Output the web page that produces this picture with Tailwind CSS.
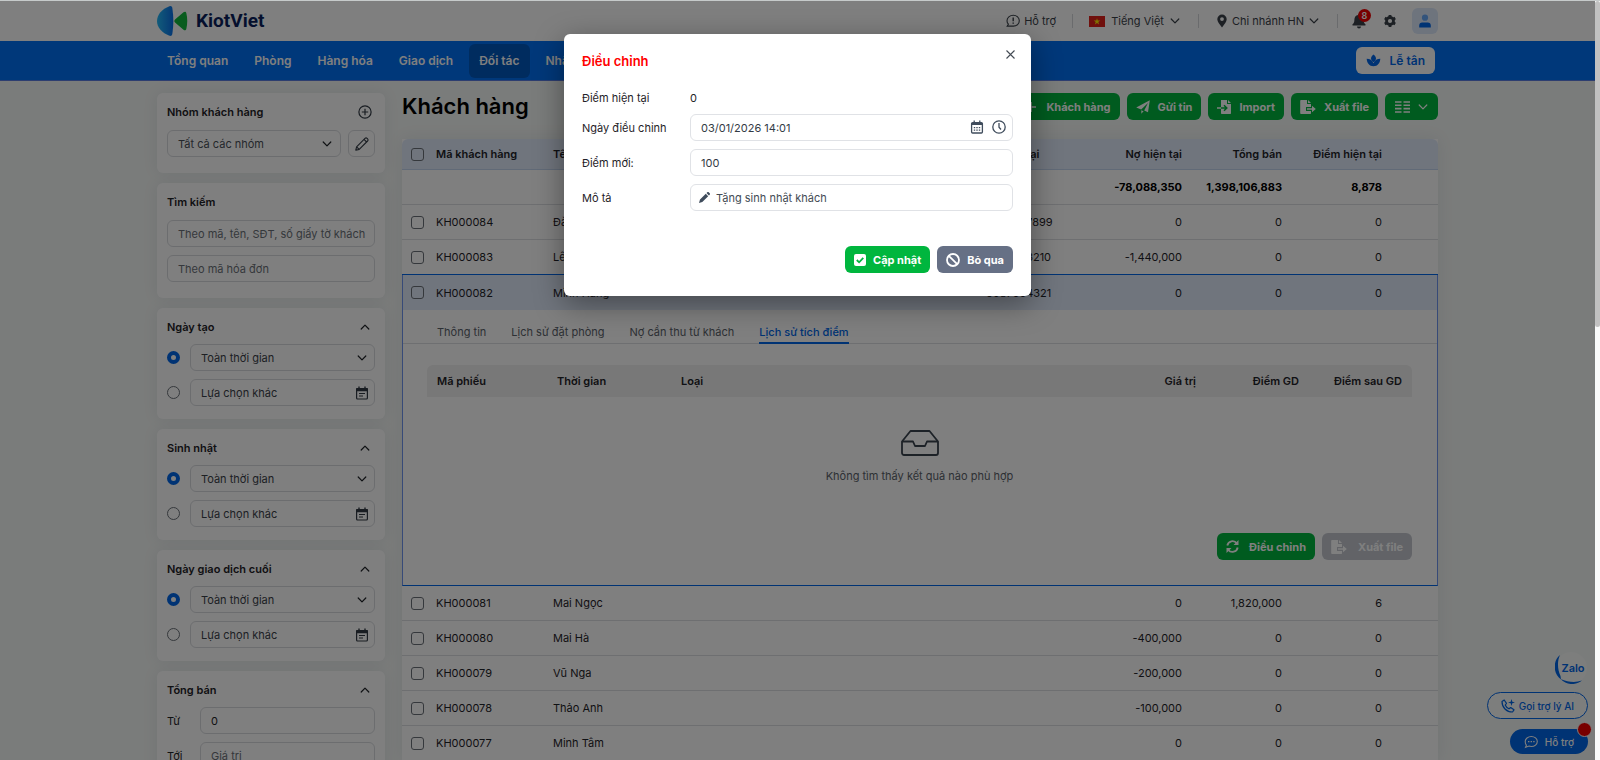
<!DOCTYPE html>
<html lang="vi">
    <head>
        <meta charset="UTF-8">
        <meta name="viewport" content="width=device-width, initial-scale=1.0">
        <title>Khách hàng | KiotViet</title>
        <script src="https://cdn.jsdelivr.net/npm/@tailwindcss/browser@4"></script>
    </head>
    <body class="font-['Inter','Noto_Sans',sans-serif] text-[11px] leading-4 text-[#1f2328]">

        <!-- Icons -->
        <svg class="hidden">
            <symbol id="i-down" viewBox="0 0 10 10"><path d="M1.2 3 5 6.9 8.8 3" fill="none" stroke="currentColor" stroke-width="1.2" stroke-linecap="round" stroke-linejoin="round"/></symbol>
            <symbol id="i-up" viewBox="0 0 10 10"><path d="M1.2 7 5 3.1 8.8 7" fill="none" stroke="currentColor" stroke-width="1.2" stroke-linecap="round" stroke-linejoin="round"/></symbol>
            <symbol id="i-note" viewBox="0 0 14 14"><path d="M4 .5v2.500M10 .5v2.500" stroke="currentColor" stroke-width="1.400"/><path d="M1 3.200C1 2.400 1.400 2 2.200 2h9.600c.8 0 1.200.4 1.200 1.200V5.200H1z" fill="currentColor"/><rect x="1.600" y="2.600" width="10.800" height="10.400" rx="1" fill="none" stroke="currentColor" stroke-width="1.200"/><path d="M4 7.500h6M4 10h4" stroke="currentColor" stroke-width="1.200"/></symbol>
            <symbol id="i-export" viewBox="0 0 16 14"><path d="M1 0h6v4h4v3H6v4h5v2.300a.7.7 0 0 1-.7.7H1a.8.8 0 0 1-.8-.7V.8A.8.8 0 0 1 1 0z" fill="currentColor"/><path d="M8 0l3 3H8z" fill="currentColor"/><path d="M7 8.200h5V5.800L15.800 9 12 12.200V9.800H7z" fill="currentColor"/></symbol>
        </svg>

        <div class="flex h-screen flex-col overflow-hidden border-t border-[#c6caca]">
            <div class="flex min-h-0 flex-1">
                <div class="relative min-w-0 flex-1 overflow-hidden bg-[#f5f8f6]">

                    <!-- Header -->
                    <header class="h-10 bg-white">
                        <div class="mx-auto flex h-full max-w-[1281px] items-center justify-between">
                            <a href="#" class="flex items-center gap-2 font-['Roboto','Inter',sans-serif] text-[19px] leading-6 font-bold text-[#0a1f5c]">
                                <svg class="h-8 w-[31px]" viewBox="0 0 31 32">
                                    <defs><linearGradient id="lg" x1="0" x2="1"><stop offset="0" stop-color="#25b8f5"/><stop offset="1" stop-color="#0a6fe8"/></linearGradient></defs>
                                    <path d="M12.500 1.200C5 4 0 9.500 0 16s5 12 12.500 14.800c1.500.5 2.500-.2 2.800-1.800 1.400-8.500 1.400-17.500 0-26-.3-1.600-1.300-2.300-2.800-1.800z" fill="url(#lg)"/>
                                    <path d="M18 14.600 26.500 7.300c1.200-1 2.400-.7 2.800.7 1.300 5 1.300 11 0 16-.4 1.400-1.600 1.700-2.800.7L18 17.400c-.9-.8-.9-2 0-2.800z" fill="#12b83c"/>
                                </svg>
                                KiotViet
                            </a>
                            <div class="flex items-center text-[#3a4149]">
                                <a href="#" class="flex items-center gap-1">
                                    <svg class="h-[14px] w-[14px]" viewBox="0 0 14 14" fill="none" stroke="currentColor" stroke-width="1.1"><path d="M7.300 1.300c3.400 0 6 2.300 6 5.400s-2.600 5.400-6 5.400H1.200l1.200-1.900C1.500 9.300 1 8.100 1 6.700c0-3.100 2.800-5.400 6.300-5.400z"/><path d="M7.200 3.600v3.600M7.200 8.400v1.400" stroke-width="1.400"/></svg>
                                    Hỗ trợ
                                </a>
                                <span class="mx-4 h-[14px] w-px bg-[#d5d7db]"></span>
                                <button class="flex items-center gap-[6px]">
                                    <svg class="h-[11px] w-4" viewBox="0 0 16 11"><path fill="#e0201b" d="M0 0h16v11H0z"/><path fill="#ffe600" d="m8 2.200.8 2.400h2.500L9.300 6.100l.8 2.400L8 7 5.900 8.500l.8-2.400-2-1.500h2.500z"/></svg>
                                    Tiếng Việt
                                    <svg class="h-[10px] w-[10px]"><use href="#i-down"/></svg>
                                </button>
                                <span class="mx-[18px] h-[14px] w-px bg-[#d5d7db]"></span>
                                <button class="flex items-center gap-[5px]">
                                    <svg class="h-[14px] w-[10px]" viewBox="0 0 10 14"><path fill="currentColor" fill-rule="evenodd" d="M5 .5a4.700 4.700 0 0 1 4.700 4.700C9.700 7.500 7.600 10 5 13.500 2.400 10 .3 7.500.3 5.200A4.700 4.700 0 0 1 5 .5zM5 3.200a1.900 1.900 0 1 0 0 3.800 1.900 1.900 0 0 0 0-3.800z"/></svg>
                                    Chi nhánh HN
                                    <svg class="h-[10px] w-[10px]"><use href="#i-down"/></svg>
                                </button>
                                <span class="mr-[14px] ml-[18px] h-[14px] w-px bg-[#d5d7db]"></span>
                                <button class="relative" aria-label="Thông báo">
                                    <svg class="h-4 w-[14px]" viewBox="0 0 14 16" fill="currentColor"><path d="M7 1a1 1 0 0 1 1 1c2.300.5 3.600 2.200 3.600 4.500 0 2.500.6 3.700 1.800 4.700.5.500.2 1.300-.5 1.300H1.100c-.7 0-1-.8-.5-1.300 1.200-1 1.800-2.200 1.800-4.700C2.400 4.200 3.700 2.500 6 2a1 1 0 0 1 1-1zM5 13.500h4a2 2 0 0 1-4 0z"/></svg>
                                    <span class="absolute -top-1 left-[6px] h-[13px] w-[13px] rounded-full bg-[#f00000] text-center text-[9px] leading-[13px] font-semibold text-white">8</span>
                                </button>
                                <button class="ml-[17px]" aria-label="Thiết lập">
                                    <svg class="h-[14px] w-[14px]" viewBox="0 0 14 14"><path d="M7 1v12M1.800 4l10.400 6M1.800 10l10.400-6" stroke="currentColor" stroke-width="2.800"/><circle cx="7" cy="7" r="3.500" fill="none" stroke="currentColor" stroke-width="2.800"/><circle cx="7" cy="7" r="2.100" fill="#fff"/></svg>
                                </button>
                                <button class="ml-[15px] flex h-[26px] w-[26px] items-center justify-center rounded-md bg-[#dce8fb]" aria-label="Tài khoản">
                                    <svg class="h-[14px] w-3" viewBox="0 0 12 14"><circle cx="6" cy="3.700" r="3.100" fill="#67a8f8"/><path d="M.2 13.500v-2c0-2 1.200-3 3-3h5.600c1.800 0 3 1 3 3v2z" fill="#0066e8"/></svg>
                                </button>
                            </div>
                        </div>
                    </header>

                    <!-- Menu -->
                    <nav class="h-10 border-b border-[#5b7de0] bg-[#0070f4]">
                        <div class="mx-auto flex h-full max-w-[1281px] items-center gap-[6px] text-[12px] font-semibold text-white">
                            <a href="#" class="rounded-md px-[10px] py-2">Tổng quan</a>
                            <a href="#" class="rounded-md px-[10px] py-2">Phòng</a>
                            <a href="#" class="rounded-md px-[10px] py-2">Hàng hóa</a>
                            <a href="#" class="rounded-md px-[10px] py-2">Giao dịch</a>
                            <a href="#" class="rounded-md bg-[#0058bf] px-[10px] py-[9px]">Đối tác</a>
                            <a href="#" class="rounded-md px-[10px] py-2">Nhân viên</a>
                            <button class="mr-[3px] ml-auto flex h-[27px] items-center gap-[9px] rounded-md bg-white px-[10px] text-[#0066e8]">
                                <svg class="h-[14px] w-[15px]" viewBox="0 0 16 16" fill="currentColor"><path d="M8 .5c2 1.500 2.800 3 2.800 4.500S9.800 8 8 9.500C6.200 8 5.200 6.500 5.200 5S6 2 8 .5z"/><path d="M.2 5.500c3.800 0 6.300 1.500 7.800 5 1.500-3.500 4-5 7.800-5-.3 5-3 8.500-7.800 8.500S.5 10.500.2 5.500z"/></svg>
                                Lễ tân
                            </button>
                        </div>
                    </nav>

                    <div class="mx-auto flex max-w-[1281px] gap-[17px] pt-3">

                        <!-- Sidebar -->
                        <aside class="flex w-[228px] shrink-0 flex-col gap-[10px]">
                            <section class="rounded-md bg-white px-[10px] pt-[10px] pb-4 shadow-[0_0_16px_rgba(20,40,80,0.08)]">
                                <div class="mb-[9px] flex h-[18px] items-center justify-between pr-[3px]">
                                    <h2 class="font-semibold">Nhóm khách hàng</h2>
                                    <button aria-label="Thêm nhóm"><svg class="h-[14px] w-[14px]" viewBox="0 0 14 14" fill="none" stroke="#333b45" stroke-width="1.2"><circle cx="7" cy="7" r="6.100"/><path d="M7 3.800v6.400M3.800 7h6.400"/></svg></button>
                                </div>
                                <div class="flex gap-[7px]">
                                    <div class="relative flex-1">
                                        <select aria-label="Nhóm khách hàng" class="h-[27px] w-full appearance-none rounded-md border border-[#d9dbdf] px-[10px] text-[#4a5058]"><option>Tất cả các nhóm</option></select>
                                        <svg class="pointer-events-none absolute top-[9px] right-[9px] h-[10px] w-[10px]"><use href="#i-down"/></svg>
                                    </div>
                                    <button class="flex h-[27px] w-[27px] items-center justify-center rounded-md border border-[#d9dbdf]" aria-label="Sửa nhóm">
                                        <svg class="h-[14px] w-[14px]" viewBox="0 0 14 14" fill="none" stroke="#333b45" stroke-width="1.1" stroke-linejoin="round"><path d="M.8 13.200l.8-3.400 8.400-8.400c.6-.6 1.500-.6 2.100 0l.5.5c.6.6.6 1.500 0 2.100l-8.400 8.400zM9 2.400l2.600 2.600M1.600 9.800l2.600 2.600"/></svg>
                                    </button>
                                </div>
                            </section>

                            <section class="rounded-md bg-white px-[10px] pt-[10px] pb-4 shadow-[0_0_16px_rgba(20,40,80,0.08)]">
                                <h2 class="mb-[9px] h-[18px] leading-[18px] font-semibold">Tìm kiếm</h2>
                                <div class="flex flex-col gap-2">
                                    <input type="text" aria-label="Tìm khách hàng" placeholder="Theo mã, tên, SĐT, số giấy tờ khách" class="h-[27px] rounded-md border border-[#d9dbdf] pr-[6px] pl-[10px] placeholder:text-[#6b7178]">
                                    <input type="text" aria-label="Tìm hóa đơn" placeholder="Theo mã hóa đơn" class="h-[27px] rounded-md border border-[#d9dbdf] pr-[6px] pl-[10px] placeholder:text-[#6b7178]">
                                </div>
                            </section>

                            <section class="rounded-md bg-white px-[10px] pt-[10px] pb-[13px] shadow-[0_0_16px_rgba(20,40,80,0.08)]">
                                <div class="mb-2 flex h-[18px] items-center justify-between pr-[5px]">
                                    <h2 class="font-semibold">Ngày tạo</h2>
                                    <button aria-label="Thu gọn"><svg class="h-[10px] w-[10px]"><use href="#i-up"/></svg></button>
                                </div>
                                <div class="flex flex-col gap-2">
                                    <div class="flex items-center gap-[10px]">
                                        <input type="radio" name="created" aria-label="Toàn thời gian" checked class="h-[13px] w-[13px] appearance-none rounded-full border border-[#6b7178] checked:border-4 checked:border-[#0066e8]">
                                        <div class="relative flex-1">
                                            <select aria-label="Ngày tạo" class="h-[27px] w-full appearance-none rounded-md border border-[#d9dbdf] px-[10px] text-[#3a4149]"><option>Toàn thời gian</option></select>
                                            <svg class="pointer-events-none absolute top-[9px] right-2 h-[10px] w-[10px]"><use href="#i-down"/></svg>
                                        </div>
                                    </div>
                                    <div class="flex items-center gap-[10px]">
                                        <input type="radio" name="created" aria-label="Lựa chọn khác" class="h-[13px] w-[13px] appearance-none rounded-full border border-[#6b7178] checked:border-4 checked:border-[#0066e8]">
                                        <div class="relative flex-1">
                                            <input type="text" readonly value="Lựa chọn khác" aria-label="Khoảng ngày tạo" class="h-[27px] w-full rounded-md border border-[#d9dbdf] px-[10px] text-[#3a4149]">
                                            <svg class="pointer-events-none absolute top-[7px] right-[6px] h-[14px] w-[14px] text-[#333b45]"><use href="#i-note"/></svg>
                                        </div>
                                    </div>
                                </div>
                            </section>

                            <section class="rounded-md bg-white px-[10px] pt-[10px] pb-[13px] shadow-[0_0_16px_rgba(20,40,80,0.08)]">
                                <div class="mb-2 flex h-[18px] items-center justify-between pr-[5px]">
                                    <h2 class="font-semibold">Sinh nhật</h2>
                                    <button aria-label="Thu gọn"><svg class="h-[10px] w-[10px]"><use href="#i-up"/></svg></button>
                                </div>
                                <div class="flex flex-col gap-2">
                                    <div class="flex items-center gap-[10px]">
                                        <input type="radio" name="birthday" aria-label="Toàn thời gian" checked class="h-[13px] w-[13px] appearance-none rounded-full border border-[#6b7178] checked:border-4 checked:border-[#0066e8]">
                                        <div class="relative flex-1">
                                            <select aria-label="Sinh nhật" class="h-[27px] w-full appearance-none rounded-md border border-[#d9dbdf] px-[10px] text-[#3a4149]"><option>Toàn thời gian</option></select>
                                            <svg class="pointer-events-none absolute top-[9px] right-2 h-[10px] w-[10px]"><use href="#i-down"/></svg>
                                        </div>
                                    </div>
                                    <div class="flex items-center gap-[10px]">
                                        <input type="radio" name="birthday" aria-label="Lựa chọn khác" class="h-[13px] w-[13px] appearance-none rounded-full border border-[#6b7178] checked:border-4 checked:border-[#0066e8]">
                                        <div class="relative flex-1">
                                            <input type="text" readonly value="Lựa chọn khác" aria-label="Khoảng sinh nhật" class="h-[27px] w-full rounded-md border border-[#d9dbdf] px-[10px] text-[#3a4149]">
                                            <svg class="pointer-events-none absolute top-[7px] right-[6px] h-[14px] w-[14px] text-[#333b45]"><use href="#i-note"/></svg>
                                        </div>
                                    </div>
                                </div>
                            </section>

                            <section class="rounded-md bg-white px-[10px] pt-[10px] pb-[13px] shadow-[0_0_16px_rgba(20,40,80,0.08)]">
                                <div class="mb-2 flex h-[18px] items-center justify-between pr-[5px]">
                                    <h2 class="font-semibold">Ngày giao dịch cuối</h2>
                                    <button aria-label="Thu gọn"><svg class="h-[10px] w-[10px]"><use href="#i-up"/></svg></button>
                                </div>
                                <div class="flex flex-col gap-2">
                                    <div class="flex items-center gap-[10px]">
                                        <input type="radio" name="lastdeal" aria-label="Toàn thời gian" checked class="h-[13px] w-[13px] appearance-none rounded-full border border-[#6b7178] checked:border-4 checked:border-[#0066e8]">
                                        <div class="relative flex-1">
                                            <select aria-label="Ngày giao dịch cuối" class="h-[27px] w-full appearance-none rounded-md border border-[#d9dbdf] px-[10px] text-[#3a4149]"><option>Toàn thời gian</option></select>
                                            <svg class="pointer-events-none absolute top-[9px] right-2 h-[10px] w-[10px]"><use href="#i-down"/></svg>
                                        </div>
                                    </div>
                                    <div class="flex items-center gap-[10px]">
                                        <input type="radio" name="lastdeal" aria-label="Lựa chọn khác" class="h-[13px] w-[13px] appearance-none rounded-full border border-[#6b7178] checked:border-4 checked:border-[#0066e8]">
                                        <div class="relative flex-1">
                                            <input type="text" readonly value="Lựa chọn khác" aria-label="Khoảng ngày giao dịch" class="h-[27px] w-full rounded-md border border-[#d9dbdf] px-[10px] text-[#3a4149]">
                                            <svg class="pointer-events-none absolute top-[7px] right-[6px] h-[14px] w-[14px] text-[#333b45]"><use href="#i-note"/></svg>
                                        </div>
                                    </div>
                                </div>
                            </section>

                            <section class="rounded-md bg-white px-[10px] pt-[10px] pb-[13px] shadow-[0_0_16px_rgba(20,40,80,0.08)]">
                                <div class="mb-2 flex h-[18px] items-center justify-between pr-[5px]">
                                    <h2 class="font-semibold">Tổng bán</h2>
                                    <button aria-label="Thu gọn"><svg class="h-[10px] w-[10px]"><use href="#i-up"/></svg></button>
                                </div>
                                <div class="flex flex-col gap-2">
                                    <div class="flex items-center">
                                        <label for="sumFrom" class="w-[33px]">Từ</label>
                                        <input id="sumFrom" type="text" value="0" class="h-[27px] min-w-0 flex-1 rounded-md border border-[#d9dbdf] px-[10px]">
                                    </div>
                                    <div class="flex items-center">
                                        <label for="sumTo" class="w-[33px]">Tới</label>
                                        <input id="sumTo" type="text" placeholder="Giá trị" class="h-[27px] min-w-0 flex-1 rounded-md border border-[#d9dbdf] px-[10px] placeholder:text-[#6b7178]">
                                    </div>
                                </div>
                            </section>
                        </aside>

                        <!-- Main Content -->
                        <main class="min-w-0 flex-1">
                            <div class="mb-[19px] flex h-[27px] items-center justify-between">
                                <h1 class="text-[22px] leading-[27px] font-semibold text-black">Khách hàng</h1>
                                <div class="flex gap-[7px] font-bold text-white">
                                    <button class="flex h-[27px] items-center gap-[10px] rounded-md bg-[#00b63e] px-[9px]">
                                        <svg class="h-[10px] w-[10px]" viewBox="0 0 10 10"><path d="M5 0v10M0 5h10" stroke="currentColor" stroke-width="1.600"/></svg>
                                        Khách hàng
                                    </button>
                                    <button class="flex h-[27px] items-center gap-2 rounded-md bg-[#00b63e] px-[9px]">
                                        <svg class="h-[14px] w-[14px]" viewBox="0 0 14 14" fill="currentColor"><path d="M13.800.2 12 12.200 8.200 10.600 12 3 5.200 9.400.2 7.600z"/><path d="M5.300 10.300 7.600 11.300 5.300 13.800z"/></svg>
                                        Gửi tin
                                    </button>
                                    <button class="flex h-[27px] items-center gap-2 rounded-md bg-[#00b63e] px-[9px]">
                                        <svg class="h-[14px] w-[14px]" viewBox="0 0 14 14"><path d="M4 0h6v4h4v9.300a.7.7 0 0 1-.7.7H4.700a.7.7 0 0 1-.7-.7zM11 0l3 3h-3z" fill="currentColor"/><path d="M4 8h5.500M7 5.200 9.800 8 7 10.800" fill="none" stroke="#00b63e" stroke-width="1.500"/><path d="M0 8h4" stroke="currentColor" stroke-width="1.500"/></svg>
                                        Import
                                    </button>
                                    <button class="flex h-[27px] items-center gap-2 rounded-md bg-[#00b63e] px-[9px]">
                                        <svg class="h-[14px] w-4"><use href="#i-export"/></svg>
                                        Xuất file
                                    </button>
                                    <button class="flex h-[27px] items-center gap-2 rounded-md bg-[#00b63e] px-[10px]" aria-label="Chọn cột">
                                        <svg class="h-3 w-[15px]" viewBox="0 0 15 12"><path d="M0 1h6.500M8.500 1H15M0 4.300h6.500M8.500 4.300H15M0 7.600h6.500M8.500 7.600H15M0 11h6.500M8.500 11H15" stroke="currentColor" stroke-width="1.600"/></svg>
                                        <svg class="h-[10px] w-[10px]"><use href="#i-down"/></svg>
                                    </button>
                                </div>
                            </div>

                            <table class="w-full table-fixed border-separate border-spacing-0 bg-white shadow-[0_0_16px_rgba(20,40,80,0.08)]">
                                <colgroup>
                                    <col class="w-[24px]">
                                    <col class="w-[117px]">
                                    <col>
                                    <col class="w-[116px]">
                                    <col class="w-[100px]">
                                    <col class="w-[100px]">
                                    <col class="w-[100px]">
                                    <col class="w-[46px]">
                                </colgroup>
                                <thead class="bg-[#e0eafb]">
                                    <tr class="[&>th]:h-[31px] [&>th]:border-b [&>th]:border-[#c3d5ee] [&>th]:px-[10px] [&>th]:font-semibold">
                                        <th class="rounded-tl-md !px-0 !pl-[9px]"><input type="checkbox" aria-label="Chọn tất cả" class="block h-[13px] w-[13px] appearance-none rounded-[3px] border border-[#6b7178]"></th>
                                        <th class="text-left">Mã khách hàng</th>
                                        <th class="text-left">Tên khách hàng</th>
                                        <th class="text-left">Điện thoại</th>
                                        <th class="text-right">Nợ hiện tại</th>
                                        <th class="text-right">Tổng bán</th>
                                        <th class="text-right">Điểm hiện tại</th>
                                        <th class="rounded-tr-md"></th>
                                    </tr>
                                </thead>
                                <tbody class="[&>tr>td]:border-b [&>tr>td]:border-[#dcdee2] [&>tr>td]:px-[10px] [&>tr>td:first-child]:px-0 [&>tr>td:first-child]:pl-[9px] [&>tr>td:nth-child(n+5)]:text-right [&>tr:not(.detail)>td]:h-[35px]">
                                    <tr class="font-bold text-black">
                                        <td></td><td></td><td></td><td></td>
                                        <td>-78,088,350</td><td>1,398,106,883</td><td>8,878</td><td></td>
                                    </tr>
                                    <tr>
                                        <td><input type="checkbox" aria-label="KH000084" class="block h-[13px] w-[13px] appearance-none rounded-[3px] border border-[#6b7178]"></td>
                                        <td>KH000084</td><td>Đào Lan</td><td>0987657899</td><td>0</td><td>0</td><td>0</td><td></td>
                                    </tr>
                                    <tr class="[&>td]:!border-[#0066e8]">
                                        <td><input type="checkbox" aria-label="KH000083" class="block h-[13px] w-[13px] appearance-none rounded-[3px] border border-[#6b7178]"></td>
                                        <td>KH000083</td><td>Lê Hoa</td><td>0987653210</td><td>-1,440,000</td><td>0</td><td>0</td><td></td>
                                    </tr>
                                    <tr class="bg-[#e0eafb] [&>td]:!border-b-0">
                                        <td class="border-l !border-l-[#6f95f0] !pl-2"><input type="checkbox" aria-label="KH000082" class="block h-[13px] w-[13px] appearance-none rounded-[3px] border border-[#6b7178]"></td>
                                        <td>KH000082</td><td>Minh Hằng</td><td>0987654321</td><td>0</td><td>0</td><td>0</td><td class="border-r !border-r-[#6f95f0]"></td>
                                    </tr>
                                    <tr class="detail">
                                        <td colspan="8" class="border-x !border-x-[#6f95f0] !border-b-[#0066e8] !p-0">
                                            <div class="flex h-[34px] items-end gap-[25px] border-b border-[#dcdee2] px-[34px] text-[#5b626a]">
                                                <a href="#" class="-mb-px border-b-2 border-transparent pb-[2px]">Thông tin</a>
                                                <a href="#" class="-mb-px border-b-2 border-transparent pb-[2px]">Lịch sử đặt phòng</a>
                                                <a href="#" class="-mb-px border-b-2 border-transparent pb-[2px]">Nợ cần thu từ khách</a>
                                                <a href="#" class="-mb-px border-b-2 border-[#0066e8] pb-[2px] font-medium text-[#0066e8]">Lịch sử tích điểm</a>
                                            </div>
                                            <div class="pt-[21px] pr-[25px] pb-[25px] pl-6">
                                                <table class="w-full table-fixed">
                                                    <colgroup>
                                                        <col class="w-[120px]">
                                                        <col class="w-[124px]">
                                                        <col>
                                                        <col class="w-[120px]">
                                                        <col class="w-[103px]">
                                                        <col class="w-[103px]">
                                                    </colgroup>
                                                    <thead>
                                                        <tr class="h-8 [&>th]:bg-[#f0f0f0] [&>th]:px-[10px] [&>th]:font-semibold">
                                                            <th class="rounded-tl-md text-left">Mã phiếu</th>
                                                            <th class="text-left">Thời gian</th>
                                                            <th class="text-left">Loại</th>
                                                            <th class="text-right">Giá trị</th>
                                                            <th class="text-right">Điểm GD</th>
                                                            <th class="rounded-tr-md text-right">Điểm sau GD</th>
                                                        </tr>
                                                    </thead>
                                                </table>
                                                <div class="flex h-[136px] flex-col items-center gap-3 pt-[33px] text-[#5b626a]">
                                                    <svg class="h-[26px] w-[38px]" viewBox="0 0 38 26" fill="none" stroke="#3a444f" stroke-width="1.800" stroke-linejoin="round"><path d="M1 11.500 9.500 1h19L37 11.500V23a2 2 0 0 1-2 2H3a2 2 0 0 1-2-2z"/><path d="M1 11.500h11l2 4.500h10l2-4.500h11"/></svg>
                                                    <p>Không tìm thấy kết quả nào phù hợp</p>
                                                </div>
                                                <div class="flex justify-end gap-[7px] font-bold text-white">
                                                    <button class="flex h-[27px] items-center gap-[10px] rounded-md bg-[#00b63e] px-[9px]">
                                                        <svg class="h-[13px] w-[13px]" viewBox="0 0 13 13" fill="none" stroke="currentColor" stroke-width="1.800"><path d="M1.300 5.500A5.300 5.300 0 0 1 10.800 3.300M11.700 7.500A5.300 5.300 0 0 1 2.200 9.700"/><path d="M12.500 0v5h-5zM.5 13V8h5z" fill="currentColor" stroke="none"/></svg>
                                                        Điều chỉnh
                                                    </button>
                                                    <button disabled class="flex h-[27px] items-center gap-[11px] rounded-md bg-[#c4c7cf] px-[9px]">
                                                        <svg class="h-[14px] w-4"><use href="#i-export"/></svg>
                                                        Xuất file
                                                    </button>
                                                </div>
                                            </div>
                                        </td>
                                    </tr>
                                    <tr>
                                        <td><input type="checkbox" aria-label="KH000081" class="block h-[13px] w-[13px] appearance-none rounded-[3px] border border-[#6b7178]"></td>
                                        <td>KH000081</td><td>Mai Ngọc</td><td></td><td>0</td><td>1,820,000</td><td>6</td><td></td>
                                    </tr>
                                    <tr>
                                        <td><input type="checkbox" aria-label="KH000080" class="block h-[13px] w-[13px] appearance-none rounded-[3px] border border-[#6b7178]"></td>
                                        <td>KH000080</td><td>Mai Hà</td><td></td><td>-400,000</td><td>0</td><td>0</td><td></td>
                                    </tr>
                                    <tr>
                                        <td><input type="checkbox" aria-label="KH000079" class="block h-[13px] w-[13px] appearance-none rounded-[3px] border border-[#6b7178]"></td>
                                        <td>KH000079</td><td>Vũ Nga</td><td></td><td>-200,000</td><td>0</td><td>0</td><td></td>
                                    </tr>
                                    <tr>
                                        <td><input type="checkbox" aria-label="KH000078" class="block h-[13px] w-[13px] appearance-none rounded-[3px] border border-[#6b7178]"></td>
                                        <td>KH000078</td><td>Thảo Anh</td><td></td><td>-100,000</td><td>0</td><td>0</td><td></td>
                                    </tr>
                                    <tr>
                                        <td><input type="checkbox" aria-label="KH000077" class="block h-[13px] w-[13px] appearance-none rounded-[3px] border border-[#6b7178]"></td>
                                        <td>KH000077</td><td>Minh Tâm</td><td></td><td>0</td><td>0</td><td>0</td><td></td>
                                    </tr>
                                </tbody>
                            </table>
                        </main>
                    </div>

                    <!-- Support buttons -->
                    <div class="absolute right-[7px] bottom-[6px] flex flex-col items-end text-[10px]">
                        <a href="#" class="relative mr-px mb-2 flex h-8 w-8 items-center justify-center rounded-full bg-[#fafcfb] text-[11px] font-semibold text-[#0066e8]">
                            <svg class="absolute inset-0 h-8 w-8" viewBox="0 0 32 32" fill="#0066e8"><path d="M5 3C-2.500 9-2 22 6 27.500L5.500 24C2.500 18 2 9 5 3zM5.500 27C12 34 22 33 27 28.500 20 31 13 30 5.500 27z"/></svg>
                            <span class="relative ml-1">Zalo</span>
                        </a>
                        <a href="#" class="mb-[10px] flex h-[27px] items-center gap-1 rounded-full border border-[#0066e8] bg-[#fafcfb] px-[13px] font-medium text-[#0066e8]">
                            <svg class="h-[14px] w-[14px]" viewBox="0 0 14 14" fill="none" stroke="currentColor" stroke-width="1.200" stroke-linejoin="round"><path d="M1 2.500 3.200 1l2.300 3.300L4.200 6c.7 1.700 2 3 3.800 3.800l1.700-1.300L13 10.800 11.500 13C5.500 13 1 8.500 1 2.500z"/><path d="M10.500 0 11.300 2.700 14 3.500 11.300 4.300 10.500 7 9.700 4.300 7 3.500 9.700 2.700z" fill="currentColor" stroke="none"/></svg>
                            Gọi trợ lý AI
                        </a>
                        <button class="relative flex h-[25px] items-center gap-[7px] rounded-full bg-[#0066e8] px-[14px] font-medium text-white">
                            <svg class="h-[14px] w-[14px]" viewBox="0 0 14 14" fill="none" stroke="currentColor" stroke-width="1.100"><path d="M7.300 1.500c3.300 0 6 2.200 6 5s-2.700 5-6 5c-.8 0-1.600-.1-2.300-.4L1.500 12.300l.9-2.200C1.500 9.200 1.200 8 1.200 6.500c0-2.800 2.800-5 6.100-5z"/><path d="M4 6.600h1.400M6.600 6.600H8M9.200 6.600h1.400" stroke-width="1.400"/></svg>
                            Hỗ trợ
                            <span class="absolute -top-[7px] -right-1 h-[15px] w-[15px] rounded-full border border-white bg-[#f00000]"></span>
                        </button>
                    </div>

                    <!-- Dialog -->
                    <div class="absolute inset-0 flex items-start justify-center bg-black/50 pt-[33px]">
                        <div role="dialog" aria-labelledby="dialogTitle" class="relative w-[467px] rounded-md bg-white px-[18px] pt-[18px] pb-[23px] shadow-[0_8px_30px_rgba(0,0,0,0.4)]">
                            <h2 id="dialogTitle" class="text-[13px] leading-[18px] font-semibold text-[#ff0000]">Điều chỉnh</h2>
                            <button class="absolute top-4 right-4" aria-label="Đóng"><svg class="h-[9px] w-[9px]" viewBox="0 0 9 9"><path d="m.5.500 8 8m0-8-8 8" stroke="#444b54" stroke-width="1.100"/></svg></button>
                            <form class="mt-[19px] flex flex-col gap-2">
                                <div class="flex h-[17px] items-center">
                                    <span class="w-[108px]">Điểm hiện tại</span>
                                    <span>0</span>
                                </div>
                                <div class="flex items-center">
                                    <label for="adjDate" class="w-[108px]">Ngày điều chỉnh</label>
                                    <div class="relative flex-1">
                                        <input id="adjDate" type="text" value="03/01/2026 14:01" class="h-[27px] w-full rounded-md border border-[#e0e2e6] px-[10px] text-[#333b45]">
                                        <span class="absolute top-[6px] right-[7px] flex gap-2">
                                            <svg class="h-[14px] w-[14px]" viewBox="0 0 14 14" fill="none" stroke="#3f4c5c" stroke-width="1.300"><rect x="1.600" y="2.600" width="10.800" height="10.400" rx="1"/><path d="M1.500 4h11" stroke-width="2"/><path d="M4.200.5v3M9.800.5v3"/><path d="M3.800 7.600h1.400M6.300 7.600h1.400M8.800 7.600h1.400M3.800 10.200h1.400M6.300 10.200h1.400M8.800 10.200h1.400"/></svg>
                                            <svg class="h-[14px] w-[14px]" viewBox="0 0 14 14" fill="none" stroke="#3f4c5c" stroke-width="1.300"><circle cx="7" cy="7" r="6.200"/><path d="M7 3v4.200L9 9.500"/></svg>
                                        </span>
                                    </div>
                                </div>
                                <div class="flex items-center">
                                    <label for="adjPoint" class="w-[108px]">Điểm mới:</label>
                                    <input id="adjPoint" type="text" value="100" class="h-[27px] min-w-0 flex-1 rounded-md border border-[#e0e2e6] px-[10px] text-[#333b45]">
                                </div>
                                <div class="flex items-center">
                                    <label for="adjNote" class="w-[108px]">Mô tả</label>
                                    <div class="relative flex-1">
                                        <svg class="absolute top-2 left-[9px] h-[11px] w-[11px]" viewBox="0 0 11 11" fill="#3f4c5c"><path d="M6.800 1.800 9.200 4.200 3.300 10 0 11l1-3.400zM7.500 1.100l.8-.8c.4-.4 1-.4 1.400 0l1 1c.4.4.4 1 0 1.400l-.8.8z"/></svg>
                                        <input id="adjNote" type="text" value="Tặng sinh nhật khách" class="h-[27px] w-full rounded-md border border-[#e0e2e6] pr-[10px] pl-[25px] text-[#444b54]">
                                    </div>
                                </div>
                                <div class="mt-[27px] flex justify-end gap-[7px] font-bold text-white">
                                    <button type="button" class="flex h-[27px] items-center gap-[7px] rounded-md bg-[#00b63e] px-[9px]">
                                        <svg class="h-3 w-3" viewBox="0 0 12 12"><rect width="12" height="12" rx="2" fill="#fff"/><path d="m2.800 6 2.300 2.300 4.200-4.400" fill="none" stroke="#00b63e" stroke-width="1.800"/></svg>
                                        Cập nhật
                                    </button>
                                    <button type="button" class="flex h-[27px] items-center gap-[7px] rounded-md bg-[#667085] px-[9px]">
                                        <svg class="h-[14px] w-[14px]" viewBox="0 0 14 14" fill="none" stroke="#fff" stroke-width="1.800"><circle cx="7" cy="7" r="6"/><path d="m2.800 2.800 8.400 8.400"/></svg>
                                        Bỏ qua
                                    </button>
                                </div>
                            </form>
                        </div>
                    </div>
                </div>

                <!-- Scroll track -->
                <div class="w-[5px] bg-[#f9fafa]">
                    <div class="h-[43%] rounded-full bg-[#c1c1c1]"></div>
                </div>
            </div>
        </div>
    </body>
</html>
